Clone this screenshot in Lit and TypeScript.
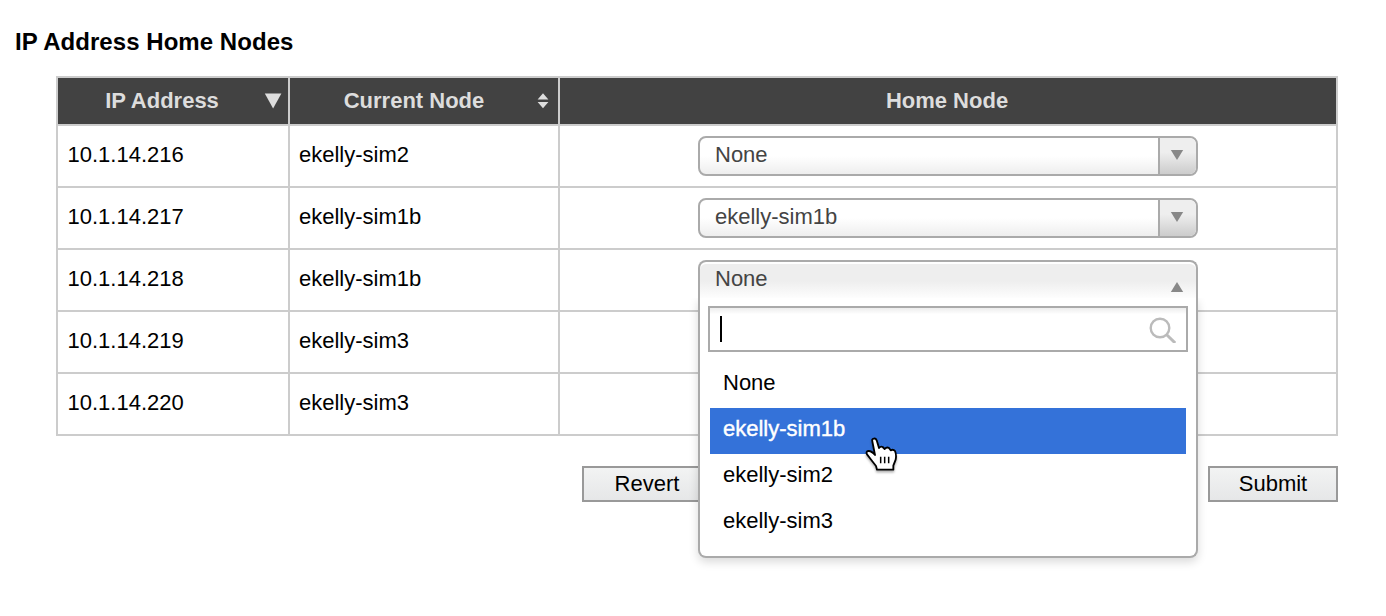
import { LitElement, html, css, nothing } from "lit";
import { customElement, property } from "lit/decorators.js";

@customElement("node-select")
class NodeSelect extends LitElement {
  @property() value = "None";
  @property({ type: Boolean }) open = false;
  @property({ attribute: false }) options: string[] = [];
  @property() active = "";

  static styles = css`
    :host { display: block; position: relative; width: 500px; height: 40px; }
    * { box-sizing: border-box; }
    .field {
      display: flex; height: 40px; border: 2px solid #aaa; border-radius: 8px;
      background: linear-gradient(to top, #eee 0%, #fff 50%); color: #444; overflow: hidden;
    }
    .value { flex: 1; padding-left: 15px; line-height: 33px; }
    .arrow {
      width: 38px; border-left: 2px solid #aaa; border-radius: 0 6px 6px 0;
      background: linear-gradient(to top, #ccc 0%, #eee 60%);
    }
    .arrow svg { display: block; margin: 11px 0 0 9px; }
    .field.open {
      border-bottom: 0; border-radius: 8px 8px 0 0;
      background: linear-gradient(to top, #fff 0%, #eee 50%);
      box-shadow: inset 0 2px 0 #fff;
    }
    .open .arrow { background: none; border-left-color: transparent; }
    .open .arrow svg { margin-top: 19px; }
    .menu {
      position: absolute; z-index: 2; top: 38px; left: 0; width: 500px; height: 260px;
      padding: 8px; border: 2px solid #aaa; border-top: 0; border-radius: 0 0 8px 8px;
      background: #fff; box-shadow: 0 4px 10px rgba(0, 0, 0, 0.15);
      clip-path: inset(0 -20px -24px -20px);
    }
    .search {
      display: flex; align-items: center; justify-content: space-between; height: 46px;
      border: 2px solid #aaa; padding: 0 10px;
      background: linear-gradient(to bottom, #eee 1%, #fff 15%);
    }
    .caret { width: 2px; height: 26px; background: #000; }
    .options { list-style: none; margin: 10px 2px 0; padding: 0; }
    .option { height: 46px; line-height: 41px; padding-left: 13px; color: #000; }
    .option.active { background: #3472d9; color: #fff; -webkit-text-stroke: 0.4px #fff; }
  `;

  render() {
    return html`
      <div class="field ${this.open ? "open" : ""}">
        <span class="value">${this.value}</span>
        <span class="arrow">
          <svg width="16" height="12" viewBox="0 0 16 12">
            <path fill="#888" d=${this.open ? "M1.8 11L8 1L14.2 11Z" : "M1.8 1H14.2L8 11Z"} />
          </svg>
        </span>
      </div>
      ${this.open
        ? html`<div class="menu">
            <div class="search">
              <span class="caret"></span>
              <svg width="28" height="28" viewBox="0 0 28 28" fill="none" stroke="#bbb">
                <circle cx="12" cy="13" r="9.3" stroke-width="2.4" />
                <path d="M18.7 19.7L27.2 28" stroke-width="3" />
              </svg>
            </div>
            <ul class="options">
              ${this.options.map(
                (o) => html`<li class="option ${o === this.active ? "active" : ""}">${o}</li>`
              )}
            </ul>
          </div>`
        : nothing}
    `;
  }
}

@customElement("app-root")
class AppRoot extends LitElement {
  static styles = css`
    :host {
      display: block; position: relative; width: 1386px; height: 616px; background: #fff; overflow: hidden;
      font: 22px "Liberation Sans", Arial, sans-serif; color: #000;
    }
    * { box-sizing: border-box; }
    .title { margin: 0; padding: 26px 0 0 15px; height: 76px; font-size: 24px; line-height: 31px; letter-spacing: 0.05px; }
    .table {
      display: grid; grid-template-columns: 230px 268px 776px; grid-template-rows: 46px;
      grid-auto-rows: 60px; gap: 2px; width: 1282px; margin-left: 56px; padding: 2px; background: #ccc;
    }
    .head {
      display: flex; align-items: center; background: #424242; color: #ddd;
      font-weight: bold; line-height: 43px;
    }
    .label { flex: 1; text-align: center; padding: 0 2px 2px 0; }
    .sortable .label { padding-left: 20px; }
    .node .label { padding-left: 18px; }
    .cell { background: #fff; padding-left: 9px; line-height: 57px; }
    .cell.ip { padding-left: 9.5px; }
    .cell.home { display: flex; justify-content: center; padding: 10px 0 0; line-height: normal; }
    .actions { display: flex; justify-content: space-between; width: 756px; margin: 30px 0 0 582px; }
    .button {
      width: 130px; height: 36px; padding: 0; border: 2px solid #999; border-radius: 0;
      background: linear-gradient(#f2f3f3, #e6e7e8); font: inherit; line-height: 32px; color: #000;
    }
    .pointer { position: absolute; z-index: 3; left: 863px; top: 435px; filter: drop-shadow(0 2px 1px rgba(0,0,0,.3)); }
  `;

  private options = ["None", "ekelly-sim1b", "ekelly-sim2", "ekelly-sim3"];
  private rows = [
    ["10.1.14.216", "ekelly-sim2", "None"],
    ["10.1.14.217", "ekelly-sim1b", "ekelly-sim1b"],
    ["10.1.14.218", "ekelly-sim1b", "None"],
    ["10.1.14.219", "ekelly-sim3", ""],
    ["10.1.14.220", "ekelly-sim3", ""],
  ];

  render() {
    return html`
      <h1 class="title">IP Address Home Nodes</h1>
      <div class="table">
        <div class="head sortable">
          <span class="label">IP Address</span>
          <svg width="40" height="46" viewBox="0 0 40 46">
            <path d="M16.8 15.5H33.4L25.1 30.5Z" fill="#ddd" />
          </svg>
        </div>
        <div class="head sortable node">
          <span class="label">Current Node</span>
          <svg width="36" height="46" viewBox="0 0 36 46">
            <path d="M15.6 21.6L21 15.3L26.4 21.6ZM15.6 24L21 30.2L26.4 24Z" fill="#ddd" />
          </svg>
        </div>
        <div class="head"><span class="label">Home Node</span></div>
        ${this.rows.map(
          ([ip, current, home], i) => html`
            <div class="cell ip">${ip}</div>
            <div class="cell">${current}</div>
            <div class="cell home">
              ${home
                ? html`<node-select .value=${home} .options=${this.options}
                    .open=${i === 2} active="ekelly-sim1b"></node-select>`
                : nothing}
            </div>
          `
        )}
      </div>
      <div class="actions">
        <button class="button">Revert</button>
        <button class="button">Submit</button>
      </div>
      <svg class="pointer" width="38" height="40" viewBox="69 105 114 120">
        <path
          d="M97 124Q95 117 101 116Q107 114 110 121L117 144Q122 138 128 141L134 147Q140 140 147 144L152 151Q160 147 165 153Q170 165 167 179L160 197V209H111L108 198L94 180L81 163Q77 154 85 153Q94 152 105 165Z"
          fill="#fff" stroke="#000" stroke-width="5.5" stroke-linejoin="round" />
        <path d="M122 170V190M134 170V190M146 170V190" stroke="#000" stroke-width="4.5" />
      </svg>
    `;
  }
}
